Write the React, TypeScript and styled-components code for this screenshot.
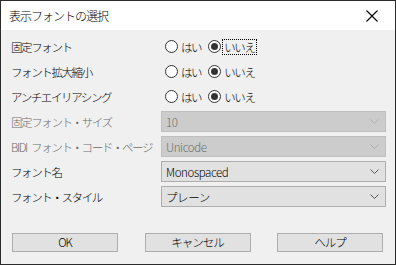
import React, { useState } from 'react';
import styled, { createGlobalStyle } from 'styled-components';

const GlobalStyle = createGlobalStyle`
  html, body {
    margin: 0;
    padding: 0;
    background: #f0f0f0;
  }
  * {
    box-sizing: border-box;
  }
`;

const Dialog = styled.div`
  width: 396px;
  height: 265px;
  border: 1px solid #2b2b2b;
  background: #f0f0f0;
  display: flex;
  flex-direction: column;
  font-family: "Noto Sans CJK JP", "Noto Sans", sans-serif;
  font-size: 11.5px;
  font-weight: 300;
  color: #000;
`;

const TitleBar = styled.div`
  height: 29px;
  background: #fff;
  display: flex;
  align-items: center;
  justify-content: space-between;
  padding: 0 0 0 8px;
  flex-shrink: 0;
`;

const Title = styled.span`
  font-size: 12px;
  letter-spacing: -1px;
  color: #000;
`;

const CloseButton = styled.button`
  width: 46px;
  height: 29px;
  border: none;
  background: transparent;
  display: flex;
  align-items: center;
  justify-content: center;
  padding: 0;
  cursor: pointer;
`;

const Body = styled.div`
  display: flex;
  flex-direction: column;
  padding: 4px 9px 0 10px;
`;

const Row = styled.div`
  height: 25px;
  display: grid;
  grid-template-columns: 150px 1fr;
  align-items: center;
`;

const Label = styled.span<{ disabled?: boolean }>`
  color: ${p => (p.disabled ? '#6d6d6d' : '#000')};
  white-space: pre;
  letter-spacing: -1.4px;
`;

const RadioGroup = styled.div`
  display: flex;
  align-items: center;
  gap: 6px;
  padding-left: 4px;
`;

const RadioOption = styled.label`
  display: flex;
  align-items: center;
  gap: 2px;
  cursor: pointer;
`;

const RadioCircle = styled.span<{ checked: boolean }>`
  width: 13px;
  height: 13px;
  border-radius: 50%;
  border: 1px solid #333;
  background: #fff;
  display: flex;
  align-items: center;
  justify-content: center;
  &::after {
    content: '';
    width: 7px;
    height: 7px;
    border-radius: 50%;
    background: ${p => (p.checked ? '#333' : 'transparent')};
  }
`;

const RadioText = styled.span<{ focused?: boolean }>`
  padding: 0 1px;
  line-height: 14px;
  letter-spacing: -1.4px;
  outline: ${p => (p.focused ? '1px dotted #000' : 'none')};
`;

const Select = styled.div<{ disabled?: boolean }>`
  height: 21px;
  width: 225px;
  border: 1px solid ${p => (p.disabled ? '#bfbfbf' : '#adadad')};
  background: ${p => (p.disabled ? '#cccccc' : '#e1e1e1')};
  color: ${p => (p.disabled ? '#6d6d6d' : '#000')};
  display: flex;
  align-items: center;
  justify-content: space-between;
  padding: 0 6px 0 4px;
`;

const SelectValue = styled.span`
  letter-spacing: -0.4px;
`;

const ButtonBar = styled.div`
  display: flex;
  justify-content: space-between;
  padding: 24px 12px 0 11px;
`;

const Button = styled.button`
  width: 106px;
  height: 19px;
  border: 1px solid #adadad;
  background: #e1e1e1;
  font-family: inherit;
  font-size: 11.5px;
  font-weight: 300;
  letter-spacing: -1px;
  color: #000;
  padding: 0;
  line-height: 17px;
`;

const Chevron: React.FC<{ disabled?: boolean }> = ({ disabled }) => (
  <svg width="9" height="5" viewBox="0 0 9 5">
    <path d="M0.5 0.5 L4.5 4.5 L8.5 0.5" fill="none" stroke={disabled ? '#adadad' : '#555'} strokeWidth="1" />
  </svg>
);

type RadioRowProps = { label: string; focused?: boolean };

const RadioRow: React.FC<RadioRowProps> = ({ label, focused }) => {
  const [value, setValue] = useState(false);
  return (
    <Row>
      <Label>{label}</Label>
      <RadioGroup>
        <RadioOption onClick={() => setValue(true)}>
          <RadioCircle checked={value} />
          <RadioText>はい</RadioText>
        </RadioOption>
        <RadioOption onClick={() => setValue(false)}>
          <RadioCircle checked={!value} />
          <RadioText focused={focused}>いいえ</RadioText>
        </RadioOption>
      </RadioGroup>
    </Row>
  );
};

const SelectRow: React.FC<{ label: string; value: string; disabled?: boolean }> = ({ label, value, disabled }) => (
  <Row>
    <Label disabled={disabled}>{label}</Label>
    <Select disabled={disabled}>
      <SelectValue>{value}</SelectValue>
      <Chevron disabled={disabled} />
    </Select>
  </Row>
);

export default function App() {
  return (
    <>
      <GlobalStyle />
      <Dialog>
        <TitleBar>
          <Title>表示フォントの選択</Title>
          <CloseButton>
            <svg width="12" height="12" viewBox="0 0 12 12">
              <path d="M0.5 0.5 L11.5 11.5 M11.5 0.5 L0.5 11.5" stroke="#000" strokeWidth="1.1" />
            </svg>
          </CloseButton>
        </TitleBar>
        <Body>
          <RadioRow label="固定フォント" focused />
          <RadioRow label="フォント拡大縮小" />
          <RadioRow label="アンチエイリアシング" />
          <SelectRow label="固定フォント・サイズ" value="10" disabled />
          <SelectRow label={'BIDI\u2002フォント・コード・ページ'} value="Unicode" disabled />
          <SelectRow label="フォント名" value="Monospaced" />
          <SelectRow label="フォント・スタイル" value="プレーン" />
        </Body>
        <ButtonBar>
          <Button>OK</Button>
          <Button>キャンセル</Button>
          <Button>ヘルプ</Button>
        </ButtonBar>
      </Dialog>
    </>
  );
}
